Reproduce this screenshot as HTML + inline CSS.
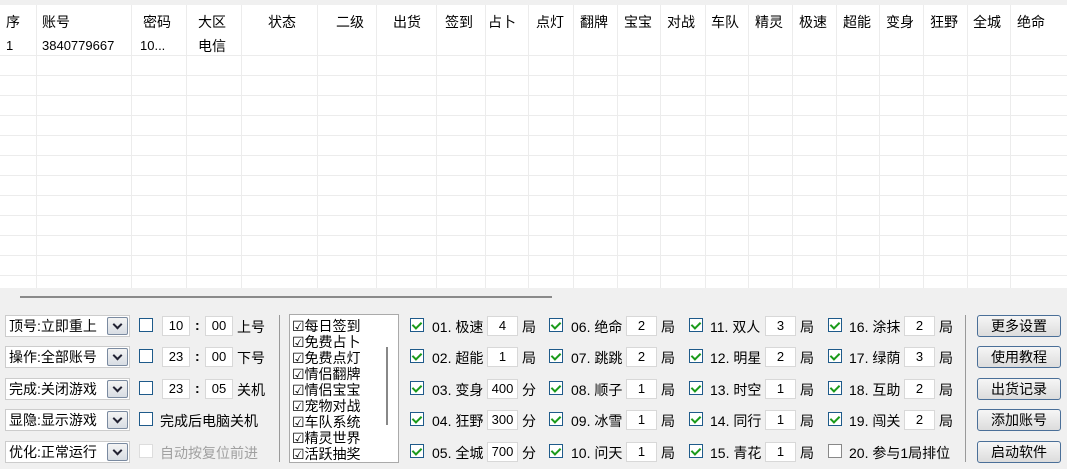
<!DOCTYPE html>
<html><head><meta charset="utf-8"><style>
*{margin:0;padding:0;box-sizing:border-box}
body{width:1067px;height:469px;overflow:hidden;background:#f0f0f0;font-family:"Liberation Sans","SimSun","Noto Sans CJK SC",sans-serif;font-size:14px;color:#000;position:relative}
.a{position:absolute;white-space:nowrap}
#tbl{position:absolute;left:0;top:5px;width:1067px;height:283px;background:#fff}
.vl{position:absolute;top:0;width:1px;height:283px;background:#ececec}
.hl{position:absolute;left:0;width:1067px;height:1px;background:#ececec}
.h{position:absolute;top:7px;font-size:14px}
.cb{position:absolute;width:14px;height:14px;border:1px solid #1e5a8a;background:#fff}
.cb.k::after{content:"";position:absolute;left:3px;top:1px;width:4px;height:7px;border:solid #1a9a1a;border-width:0 2px 2px 0;transform:rotate(45deg)}
.cb.d{border-color:#ddd}
.in{position:absolute;height:20px;background:#fff;border:1px solid #d8d8d8;text-align:center;font-size:13px;line-height:18px}
.cmb{position:absolute;left:5px;width:125px;height:22px;background:#fff;border:1px solid #ccc;font-size:14px;line-height:20px;padding-left:3px}
.cmb i{position:absolute;right:1px;top:1px;width:21px;height:18px;border:1px solid #7a8aa0;border-radius:2px;background:linear-gradient(#f4f4f4,#d8dde4)}
.cmb i::after{content:"";position:absolute;left:6px;top:3px;width:5px;height:5px;border:solid #223;border-width:0 2px 2px 0;transform:rotate(45deg)}
.btn{position:absolute;left:977px;width:84px;height:22px;border:1px solid #4a6f98;border-radius:3px;background:linear-gradient(#f6f6f6,#dcdcdc);text-align:center;line-height:20px;font-size:14px}
.lb{position:absolute;font-size:14px;line-height:16px}
</style></head><body>
<div id="tbl">
<div class="vl" style="left:36px"></div><div class="vl" style="left:131px"></div><div class="vl" style="left:186px"></div><div class="vl" style="left:241px"></div><div class="vl" style="left:317px"></div><div class="vl" style="left:376px"></div><div class="vl" style="left:436px"></div><div class="vl" style="left:485px"></div><div class="vl" style="left:528px"></div><div class="vl" style="left:573px"></div><div class="vl" style="left:617px"></div><div class="vl" style="left:660px"></div><div class="vl" style="left:705px"></div><div class="vl" style="left:748px"></div><div class="vl" style="left:792px"></div><div class="vl" style="left:836px"></div><div class="vl" style="left:879px"></div><div class="vl" style="left:923px"></div><div class="vl" style="left:967px"></div><div class="vl" style="left:1010px"></div>
<div class="hl" style="top:50px"></div><div class="hl" style="top:70px"></div><div class="hl" style="top:90px"></div><div class="hl" style="top:110px"></div><div class="hl" style="top:130px"></div><div class="hl" style="top:150px"></div><div class="hl" style="top:170px"></div><div class="hl" style="top:190px"></div><div class="hl" style="top:210px"></div><div class="hl" style="top:230px"></div><div class="hl" style="top:250px"></div><div class="hl" style="top:270px"></div>
<span class="h" style="left:6px">序</span><span class="h" style="left:42px">账号</span><span class="h" style="left:143px">密码</span><span class="h" style="left:198px">大区</span><span class="h" style="left:268px">状态</span><span class="h" style="left:336px">二级</span><span class="h" style="left:393px">出货</span><span class="h" style="left:445px">签到</span><span class="h" style="left:488px">占卜</span><span class="h" style="left:536px">点灯</span><span class="h" style="left:580px">翻牌</span><span class="h" style="left:624px">宝宝</span><span class="h" style="left:667px">对战</span><span class="h" style="left:711px">车队</span><span class="h" style="left:755px">精灵</span><span class="h" style="left:799px">极速</span><span class="h" style="left:843px">超能</span><span class="h" style="left:886px">变身</span><span class="h" style="left:930px">狂野</span><span class="h" style="left:973px">全城</span><span class="h" style="left:1017px">绝命</span>
<span class="a" style="left:6px;top:33px;font-size:13px">1</span><span class="a" style="left:42px;top:33px;font-size:13px">3840779667</span><span class="a" style="left:140px;top:33px;font-size:13px">10...</span><span class="a" style="left:198px;top:31px">电信</span>
</div>
<div class="a" style="left:20px;top:296px;width:532px;height:2px;background:#8a8a8a"></div>

<div class="cmb" style="top:315px">顶号:立即重上<i></i></div>
<div class="cmb" style="top:346px">操作:全部账号<i></i></div>
<div class="cmb" style="top:378px">完成:关闭游戏<i></i></div>
<div class="cmb" style="top:409px">显隐:显示游戏<i></i></div>
<div class="cmb" style="top:441px">优化:正常运行<i></i></div>
<div class="cb" style="left:139px;top:318px"></div><div class="in" style="left:162px;top:316px;width:28px">10</div><span class="a" style="left:195px;top:317px;font-weight:bold">:</span><div class="in" style="left:205px;top:316px;width:28px">00</div><span class="a" style="left:237px;top:317px">上号</span>
<div class="cb" style="left:139px;top:349px"></div><div class="in" style="left:162px;top:347px;width:28px">23</div><span class="a" style="left:195px;top:348px;font-weight:bold">:</span><div class="in" style="left:205px;top:347px;width:28px">00</div><span class="a" style="left:237px;top:348px">下号</span>
<div class="cb" style="left:139px;top:381px"></div><div class="in" style="left:162px;top:379px;width:28px">23</div><span class="a" style="left:195px;top:380px;font-weight:bold">:</span><div class="in" style="left:205px;top:379px;width:28px">05</div><span class="a" style="left:237px;top:380px">关机</span>
<div class="cb" style="left:139px;top:412px"></div><span class="a" style="left:160px;top:411px">完成后电脑关机</span>
<div class="cb d" style="left:139px;top:444px"></div><span class="a" style="left:160px;top:443px;color:#a0a0a0">自动按复位前进</span>
<div class="a" style="left:279px;top:315px;width:1px;height:147px;background:#999"></div>

<div class="a" style="left:289px;top:314px;width:110px;height:149px;background:#fff;border:1px solid #aaa;overflow:hidden">
<div class="a" style="left:96px;top:32px;width:2px;height:78px;background:#888"></div>
<div class="lb" style="left:2px;top:3px">☑每日签到</div><div class="lb" style="left:2px;top:19px">☑免费占卜</div><div class="lb" style="left:2px;top:35px">☑免费点灯</div><div class="lb" style="left:2px;top:51px">☑情侣翻牌</div><div class="lb" style="left:2px;top:67px">☑情侣宝宝</div><div class="lb" style="left:2px;top:83px">☑宠物对战</div><div class="lb" style="left:2px;top:99px">☑车队系统</div><div class="lb" style="left:2px;top:115px">☑精灵世界</div><div class="lb" style="left:2px;top:131px">☑活跃抽奖</div>
</div>

<div class="cb k" style="left:410px;top:318px"></div><span class="a" style="left:432px;top:317px">01. 极速</span><div class="in" style="left:487px;top:316px;width:31px">4</div><span class="a" style="left:522px;top:317px">局</span>
<div class="cb k" style="left:410px;top:349px"></div><span class="a" style="left:432px;top:348px">02. 超能</span><div class="in" style="left:487px;top:347px;width:31px">1</div><span class="a" style="left:522px;top:348px">局</span>
<div class="cb k" style="left:410px;top:381px"></div><span class="a" style="left:432px;top:380px">03. 变身</span><div class="in" style="left:487px;top:379px;width:31px">400</div><span class="a" style="left:522px;top:380px">分</span>
<div class="cb k" style="left:410px;top:412px"></div><span class="a" style="left:432px;top:411px">04. 狂野</span><div class="in" style="left:487px;top:410px;width:31px">300</div><span class="a" style="left:522px;top:411px">分</span>
<div class="cb k" style="left:410px;top:444px"></div><span class="a" style="left:432px;top:443px">05. 全城</span><div class="in" style="left:487px;top:442px;width:31px">700</div><span class="a" style="left:522px;top:443px">分</span>
<div class="cb k" style="left:549px;top:318px"></div><span class="a" style="left:571px;top:317px">06. 绝命</span><div class="in" style="left:626px;top:316px;width:31px">2</div><span class="a" style="left:661px;top:317px">局</span>
<div class="cb k" style="left:549px;top:349px"></div><span class="a" style="left:571px;top:348px">07. 跳跳</span><div class="in" style="left:626px;top:347px;width:31px">2</div><span class="a" style="left:661px;top:348px">局</span>
<div class="cb k" style="left:549px;top:381px"></div><span class="a" style="left:571px;top:380px">08. 顺子</span><div class="in" style="left:626px;top:379px;width:31px">1</div><span class="a" style="left:661px;top:380px">局</span>
<div class="cb k" style="left:549px;top:412px"></div><span class="a" style="left:571px;top:411px">09. 冰雪</span><div class="in" style="left:626px;top:410px;width:31px">1</div><span class="a" style="left:661px;top:411px">局</span>
<div class="cb k" style="left:549px;top:444px"></div><span class="a" style="left:571px;top:443px">10. 问天</span><div class="in" style="left:626px;top:442px;width:31px">1</div><span class="a" style="left:661px;top:443px">局</span>
<div class="cb k" style="left:689px;top:318px"></div><span class="a" style="left:710px;top:317px">11. 双人</span><div class="in" style="left:765px;top:316px;width:31px">3</div><span class="a" style="left:800px;top:317px">局</span>
<div class="cb k" style="left:689px;top:349px"></div><span class="a" style="left:710px;top:348px">12. 明星</span><div class="in" style="left:765px;top:347px;width:31px">2</div><span class="a" style="left:800px;top:348px">局</span>
<div class="cb k" style="left:689px;top:381px"></div><span class="a" style="left:710px;top:380px">13. 时空</span><div class="in" style="left:765px;top:379px;width:31px">1</div><span class="a" style="left:800px;top:380px">局</span>
<div class="cb k" style="left:689px;top:412px"></div><span class="a" style="left:710px;top:411px">14. 同行</span><div class="in" style="left:765px;top:410px;width:31px">1</div><span class="a" style="left:800px;top:411px">局</span>
<div class="cb k" style="left:689px;top:444px"></div><span class="a" style="left:710px;top:443px">15. 青花</span><div class="in" style="left:765px;top:442px;width:31px">1</div><span class="a" style="left:800px;top:443px">局</span>
<div class="cb k" style="left:828px;top:318px"></div><span class="a" style="left:849px;top:317px">16. 涂抹</span><div class="in" style="left:904px;top:316px;width:31px">2</div><span class="a" style="left:939px;top:317px">局</span>
<div class="cb k" style="left:828px;top:349px"></div><span class="a" style="left:849px;top:348px">17. 绿荫</span><div class="in" style="left:904px;top:347px;width:31px">3</div><span class="a" style="left:939px;top:348px">局</span>
<div class="cb k" style="left:828px;top:381px"></div><span class="a" style="left:849px;top:380px">18. 互助</span><div class="in" style="left:904px;top:379px;width:31px">2</div><span class="a" style="left:939px;top:380px">局</span>
<div class="cb k" style="left:828px;top:412px"></div><span class="a" style="left:849px;top:411px">19. 闯关</span><div class="in" style="left:904px;top:410px;width:31px">2</div><span class="a" style="left:939px;top:411px">局</span>
<div class="cb" style="left:828px;top:444px;border-color:#888"></div><span class="a" style="left:849px;top:443px">20. 参与1局排位</span>
<div class="a" style="left:965px;top:315px;width:1px;height:147px;background:#999"></div>
<div class="btn" style="top:315px">更多设置</div>
<div class="btn" style="top:346px">使用教程</div>
<div class="btn" style="top:378px">出货记录</div>
<div class="btn" style="top:409px">添加账号</div>
<div class="btn" style="top:441px">启动软件</div>
</body></html>
